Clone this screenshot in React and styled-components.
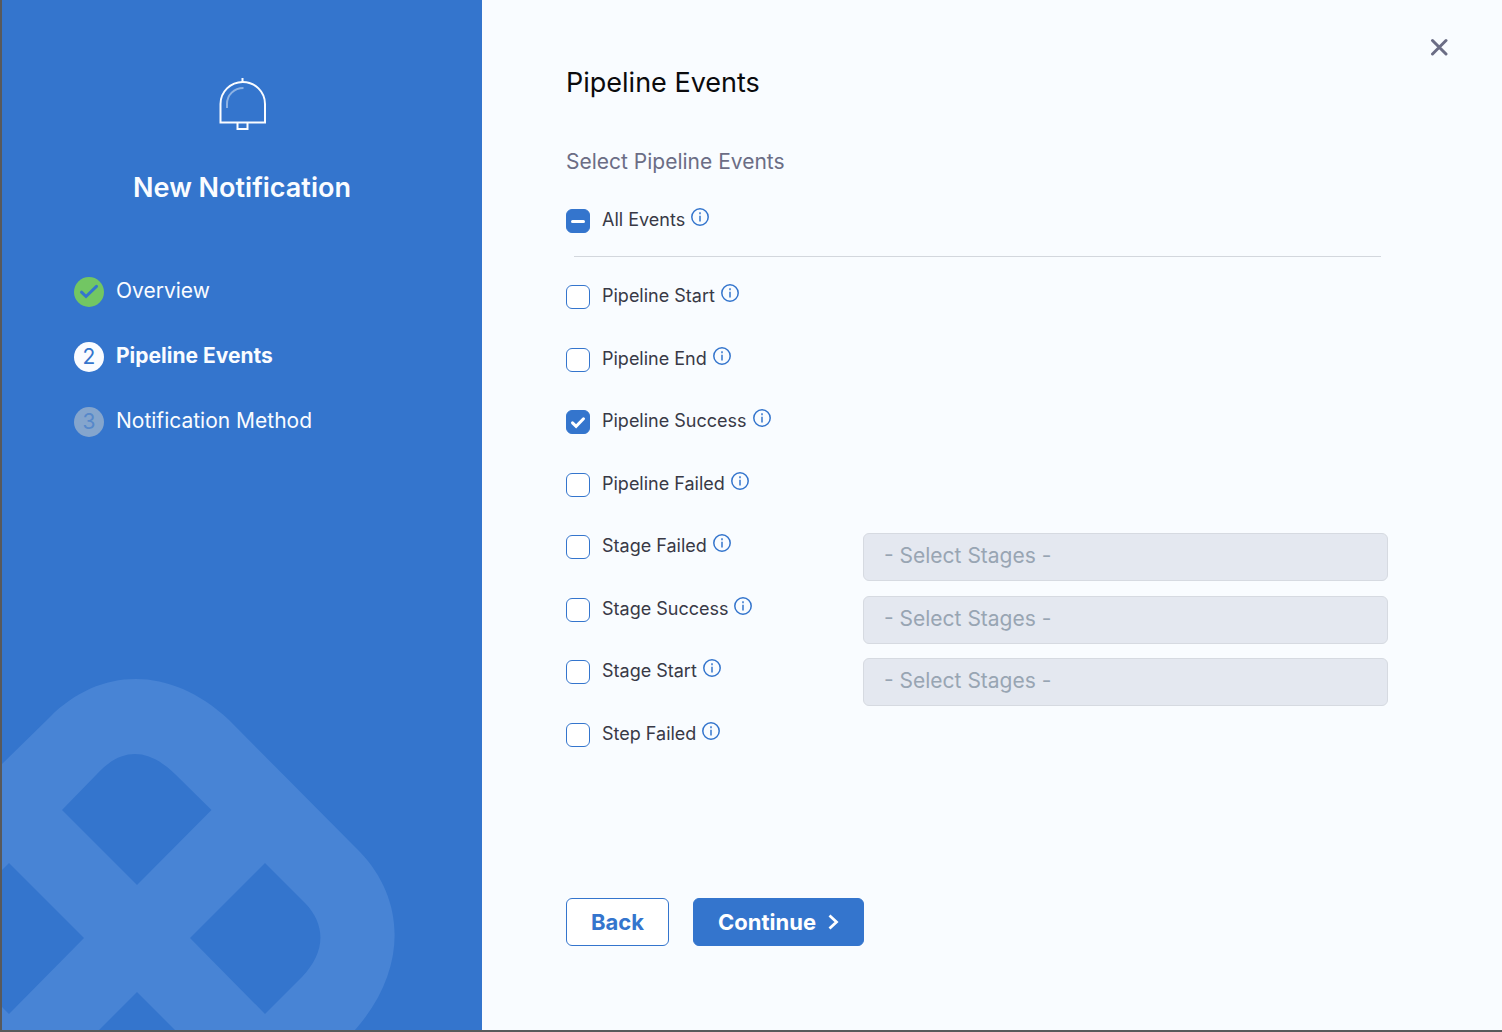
import React, { useEffect, useRef, useState } from "react";
import styled, { createGlobalStyle, css } from "styled-components";

const color = {
  blue: "#3475cd",
  canvas: "#f9fcff",
  ink: "#383946",
  muted: "#6b6d85",
  edge: "#58595b",
};

const GlobalStyle = createGlobalStyle`
  *, *::before, *::after { box-sizing: border-box; }
  body {
    margin: 0;
    font-family: Inter, "Liberation Sans", sans-serif;
    color: ${color.ink};
    background: ${color.canvas};
  }
`;

const Wizard = styled.div`
  display: flex;
  min-height: 100vh;
  border-left: 2px solid ${color.edge};
  border-bottom: 2px solid ${color.edge};
`;

const Sidebar = styled.aside`
  flex: 0 0 32%;
  display: flex;
  flex-direction: column;
  color: #fafcff;
  background: ${color.blue};
`;

const SidebarHead = styled.header`
  display: flex;
  flex-direction: column;
  align-items: center;
  gap: 39px;
  padding-top: 77px;
`;

const SidebarTitle = styled.h1`
  margin: 0;
  font-size: 27px;
  line-height: 36px;
  font-weight: 600;
`;

const Steps = styled.ol`
  display: flex;
  flex-direction: column;
  gap: 35px;
  margin: 71px 0 0;
  padding: 0 24px 0 72px;
  list-style: none;
`;

const Step = styled.li`
  display: flex;
  gap: 12px;
  font-size: 21px;
  line-height: 28px;
  font-weight: ${(p) => (p.$active ? 700 : 400)};
`;

const badgeTone = {
  done: css`background: #72c663; color: ${color.blue};`,
  current: css`background: #fafcff; color: ${color.blue};`,
  upcoming: css`background: #84a5cd; color: #5688ca;`,
};

const Badge = styled.span`
  display: grid;
  place-items: center;
  width: 30px;
  height: 30px;
  border-radius: 50%;
  font-size: 21px;
  font-weight: 400;
  ${(p) => badgeTone[p.$status]}
`;

const Watermark = styled.svg`
  display: block;
  width: 394px;
  max-width: 100%;
  margin-top: auto;
`;

const Main = styled.main`
  flex: 1;
  display: flex;
  align-items: flex-start;
  gap: 30px;
  padding: 26px 42px 24px 84px;
`;

const Content = styled.form`
  flex: 1;
  min-width: 0;
  display: flex;
  flex-direction: column;
  padding-top: 39px;
`;

const Heading = styled.h2`
  margin: 0;
  font-size: 27px;
  line-height: 36px;
  font-weight: 400;
  color: #0b0b0d;
`;

const Events = styled.fieldset`
  min-width: 0;
  margin: 47px 0 0;
  padding: 0;
  border: 0;
`;

const Legend = styled.legend`
  padding: 0;
  font-size: 21px;
  line-height: 28px;
  color: ${color.muted};
`;

const AllEvents = styled.div`
  padding-top: 31px;
`;

const Rule = styled.hr`
  margin: 23px 7px 26px 8px;
  border: 0;
  border-top: 1px solid #d3d7dd;
`;

const EventList = styled.div`
  display: grid;
  grid-auto-rows: 1fr;
  min-height: 500px;
`;

const EventRow = styled.div`
  display: grid;
  grid-template-columns: 297px 1fr;
  align-items: start;
`;

const EventName = styled.div`
  display: flex;
  align-items: flex-start;
  gap: 6px;
`;

const CheckLabel = styled.label`
  display: flex;
  gap: 12px;
  font-size: 18px;
  line-height: 26px;
  cursor: pointer;
`;

const CheckFrame = styled.span`
  display: grid;
  margin-top: 2px;
  width: 24px;
  height: 24px;
  > * { grid-area: 1 / 1; }
`;

const CheckInput = styled.input`
  appearance: none;
  width: 24px;
  height: 24px;
  margin: 0;
  border: 1px solid ${color.blue};
  border-radius: 6px;
  background: #fff;
  cursor: pointer;
  &:checked, &:indeterminate { background: ${color.blue}; }
`;

const CheckMark = styled.svg`
  width: 24px;
  height: 24px;
  pointer-events: none;
  fill: none;
  stroke: #fff;
  stroke-width: 3;
  stroke-linecap: round;
`;

const InfoButton = styled.button`
  display: block;
  margin: 1px 0 0;
  padding: 0;
  border: 0;
  background: none;
  color: ${color.blue};
  cursor: pointer;
  svg { display: block; }
`;

const StageSelect = styled.select`
  appearance: none;
  width: 100%;
  height: 48px;
  padding: 0 20px 2px;
  border: 1px solid #d6dae1;
  border-radius: 6px;
  background: #e4e8f0;
  font: 400 21px/28px Inter, "Liberation Sans", sans-serif;
  color: #98a5b3;
  opacity: 1;
`;

const Actions = styled.footer`
  display: flex;
  gap: 24px;
  margin-top: 115px;
`;

const Button = styled.button`
  display: flex;
  align-items: center;
  gap: 12px;
  height: 48px;
  padding: 0 24px;
  border: 1px solid ${color.blue};
  border-radius: 6px;
  font: 700 22px/28px Inter, "Liberation Sans", sans-serif;
  color: ${(p) => (p.$primary ? "#fff" : color.blue)};
  background: ${(p) => (p.$primary ? color.blue : "#fff")};
  cursor: pointer;
`;

const CloseButton = styled.button`
  display: grid;
  place-items: center;
  width: 42px;
  height: 42px;
  padding: 0;
  border: 0;
  background: none;
  color: ${color.muted};
  cursor: pointer;
`;

const Bell = () => (
  <svg width="48" height="54" viewBox="0 0 48 54" fill="none" stroke="#fafcff" strokeWidth="2" aria-hidden="true">
    <path d="M24.500 1v4" />
    <path d="M2.500 45.500V27a22.200 22 0 0 1 44.500 0v18.500z" />
    <path d="M19.500 46v6h10v-6" />
    <path d="M9 31v-4c0-9 7-16 16.500-16" opacity=".45" />
  </svg>
);

const DoneTick = () => (
  <svg width="30" height="30" viewBox="0 0 30 30" fill="none" stroke="currentColor" strokeWidth="3" strokeLinecap="round" aria-hidden="true">
    <path d="M7.500 15.200l4.500 4.300L22.500 9.300" />
  </svg>
);

const InfoIcon = () => (
  <svg width="18" height="18" viewBox="0 0 18 18" fill="none" stroke="currentColor" strokeWidth="1.500" aria-hidden="true">
    <circle cx="9" cy="9" r="8.200" />
    <path d="M9 7.800V13.500M9 4.200v2" />
  </svg>
);

const Chevron = () => (
  <svg width="11" height="16" viewBox="0 0 11 16" fill="none" stroke="currentColor" strokeWidth="2.800" aria-hidden="true">
    <path d="M1.500 1.500L8.500 8l-7 6.500" />
  </svg>
);

const Cross = () => (
  <svg width="18" height="18" viewBox="0 0 18 18" fill="none" stroke="currentColor" strokeWidth="3" strokeLinecap="round" aria-hidden="true">
    <path d="M2.500 2.500l13.500 13.500M16 2.500L2.500 16" />
  </svg>
);

const BrandWatermark = () => (
  <Watermark viewBox="2 678 394 352" aria-hidden="true">
    <path
      fill="#4884d5"
      fillRule="evenodd"
      d="M2 764L50 717C100 667 170 665 229 720L360 852C406 900 408 970 355 1030H175L137 992L99 1030H2V1007L9 1014L84 938L9 863L2 870Z
         M62 810L137 885L211.500 810L175 774C148 748 122 747 97 774Z
         M190 938L265 1014L302 977C325 953 327 926 305 903L265 863Z"
    />
  </Watermark>
);

function Checkbox({ id, label, checked, indeterminate = false, onChange }) {
  const ref = useRef(null);
  useEffect(() => {
    ref.current.indeterminate = indeterminate;
  }, [indeterminate]);
  return (
    <EventName>
      <CheckLabel htmlFor={id}>
        <CheckFrame>
          <CheckInput ref={ref} id={id} type="checkbox" checked={checked} onChange={onChange} />
          <CheckMark viewBox="0 0 24 24" aria-hidden="true">
            {indeterminate && <path d="M6.500 12.500h11" />}
            {checked && !indeterminate && <path d="M6.500 12.800l3.600 3.500L17.500 8.800" />}
          </CheckMark>
        </CheckFrame>
        {label}
      </CheckLabel>
      <InfoButton type="button" aria-label={`About ${label}`}>
        <InfoIcon />
      </InfoButton>
    </EventName>
  );
}

const steps = [
  { name: "Overview", status: "done" },
  { name: "Pipeline Events", status: "current" },
  { name: "Notification Method", status: "upcoming" },
];

const events = [
  { id: "pipeline-start", label: "Pipeline Start" },
  { id: "pipeline-end", label: "Pipeline End" },
  { id: "pipeline-success", label: "Pipeline Success" },
  { id: "pipeline-failed", label: "Pipeline Failed" },
  { id: "stage-failed", label: "Stage Failed", stages: true },
  { id: "stage-success", label: "Stage Success", stages: true },
  { id: "stage-start", label: "Stage Start", stages: true },
  { id: "step-failed", label: "Step Failed" },
];

export default function App() {
  const [selected, setSelected] = useState(["pipeline-success"]);
  const all = selected.length === events.length;
  const toggle = (id) =>
    setSelected((s) => (s.includes(id) ? s.filter((x) => x !== id) : [...s, id]));

  return (
    <>
      <GlobalStyle />
      <Wizard>
        <Sidebar>
          <SidebarHead>
            <Bell />
            <SidebarTitle>New Notification</SidebarTitle>
          </SidebarHead>
          <Steps>
            {steps.map((step, i) => (
              <Step key={step.name} $active={step.status === "current"}>
                <Badge $status={step.status}>{step.status === "done" ? <DoneTick /> : i + 1}</Badge>
                {step.name}
              </Step>
            ))}
          </Steps>
          <BrandWatermark />
        </Sidebar>
        <Main>
          <Content onSubmit={(e) => e.preventDefault()}>
            <Heading>Pipeline Events</Heading>
            <Events>
              <Legend>Select Pipeline Events</Legend>
              <AllEvents>
                <Checkbox
                  id="all-events"
                  label="All Events"
                  checked={all}
                  indeterminate={selected.length > 0 && !all}
                  onChange={() => setSelected(all ? [] : events.map((e) => e.id))}
                />
              </AllEvents>
              <Rule />
              <EventList>
                {events.map(({ id, label, stages }) => (
                  <EventRow key={id}>
                    <Checkbox id={id} label={label} checked={selected.includes(id)} onChange={() => toggle(id)} />
                    {stages && (
                      <StageSelect aria-label={`${label} stages`} disabled={!selected.includes(id)}>
                        <option>- Select Stages -</option>
                      </StageSelect>
                    )}
                  </EventRow>
                ))}
              </EventList>
            </Events>
            <Actions>
              <Button type="button">Back</Button>
              <Button type="submit" $primary>
                Continue
                <Chevron />
              </Button>
            </Actions>
          </Content>
          <CloseButton type="button" aria-label="Close">
            <Cross />
          </CloseButton>
        </Main>
      </Wizard>
    </>
  );
}
